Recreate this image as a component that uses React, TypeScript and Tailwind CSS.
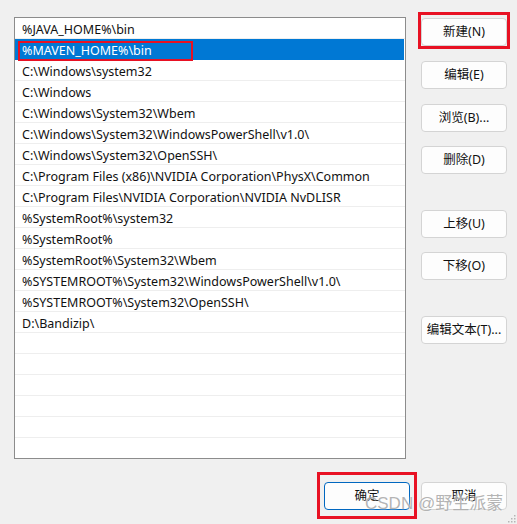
const entries = [
  "%JAVA_HOME%\\bin",
  "%MAVEN_HOME%\\bin",
  "C:\\Windows\\system32",
  "C:\\Windows",
  "C:\\Windows\\System32\\Wbem",
  "C:\\Windows\\System32\\WindowsPowerShell\\v1.0\\",
  "C:\\Windows\\System32\\OpenSSH\\",
  "C:\\Program Files (x86)\\NVIDIA Corporation\\PhysX\\Common",
  "C:\\Program Files\\NVIDIA Corporation\\NVIDIA NvDLISR",
  "%SystemRoot%\\system32",
  "%SystemRoot%",
  "%SystemRoot%\\System32\\Wbem",
  "%SYSTEMROOT%\\System32\\WindowsPowerShell\\v1.0\\",
  "%SYSTEMROOT%\\System32\\OpenSSH\\",
  "D:\\Bandizip\\",
  "",
  "",
  "",
  "",
  "",
  "",
];

function Btn({label, className = ""}: {label: string; className?: string}) {
  return (
    <button
      className={`w-[86px] h-[28px] rounded-[4px] border border-[#d4d4d4] bg-[#fdfdfd] text-[12.5px] text-[#111] ${className}`}
    >
      {label}
    </button>
  );
}

export default function App() {
  return (
    <div
      className="relative w-[517px] h-[524px] bg-[#f0f0f0] overflow-hidden"
      style={{fontFamily: '"Noto Sans", "Noto Sans CJK SC", sans-serif'}}
    >
      <div className="flex pt-[17px] pl-[14px]">
        {/* list */}
        <div className="w-[392px] h-[442px] border border-[#8c8c8c] bg-white overflow-hidden">
          {entries.map((e, i) => (
            <div
              key={i}
              className={`h-[21px] pt-[4px] flex items-center pl-[7px] text-[12.5px] whitespace-nowrap ${
                i === 1
                  ? "bg-[#0078d4] text-white mr-[1px]"
                  : "border-b border-[#eeeeee] text-[#111]"
              }`}
            >
              {e}
            </div>
          ))}
        </div>

        {/* side buttons */}
        <div className="flex flex-col ml-[15px] pt-[1px]">
          <Btn label="新建(N)" />
          <Btn label="编辑(E)" className="mt-[15px]" />
          <Btn label="浏览(B)..." className="mt-[15px]" />
          <Btn label="删除(D)" className="mt-[14px]" />
          <Btn label="上移(U)" className="mt-[36px]" />
          <Btn label="下移(O)" className="mt-[14px]" />
          <Btn label="编辑文本(T)..." className="mt-[36px]" />
        </div>
      </div>

      {/* bottom buttons */}
      <div className="flex justify-end gap-[11px] pr-[10px] mt-[23px]">
        <Btn label="确定" className="!border-[#0067c0] w-[85px] h-[27px]" />
        <Btn label="取消" className="w-[85px] h-[27px]" />
      </div>

      {/* red annotation boxes */}
      <div className="absolute left-[18px] top-[41px] w-[175px] h-[20px] border-2 border-[#e81123]" />
      <div className="absolute left-[418px] top-[12px] w-[92px] h-[37px] border-[3px] border-[#e81123]" />
      <div className="absolute left-[317px] top-[472px] w-[100px] h-[47px] border-[3px] border-[#e81123]" />

      {/* watermark */}
      <div
        className="absolute left-[365px] top-[493px] text-[17px] leading-[22px] text-[#a0a0a0]/80 whitespace-nowrap"
        style={{fontFamily: '"Liberation Sans", "Noto Sans CJK SC", sans-serif', textShadow: "0 0 2px #fff"}}
      >
        CSDN @野生派蒙
      </div>

      {/* resize grip */}
      <svg className="absolute right-[1px] bottom-[1px]" width="10" height="10" viewBox="0 0 10 10">
        {[
          [8, 2],
          [5, 5],
          [8, 5],
          [2, 8],
          [5, 8],
          [8, 8],
        ].map(([x, y], i) => (
          <rect key={i} x={x} y={y} width="1.5" height="1.5" fill="#b5b5b5" />
        ))}
      </svg>
    </div>
  );
}
